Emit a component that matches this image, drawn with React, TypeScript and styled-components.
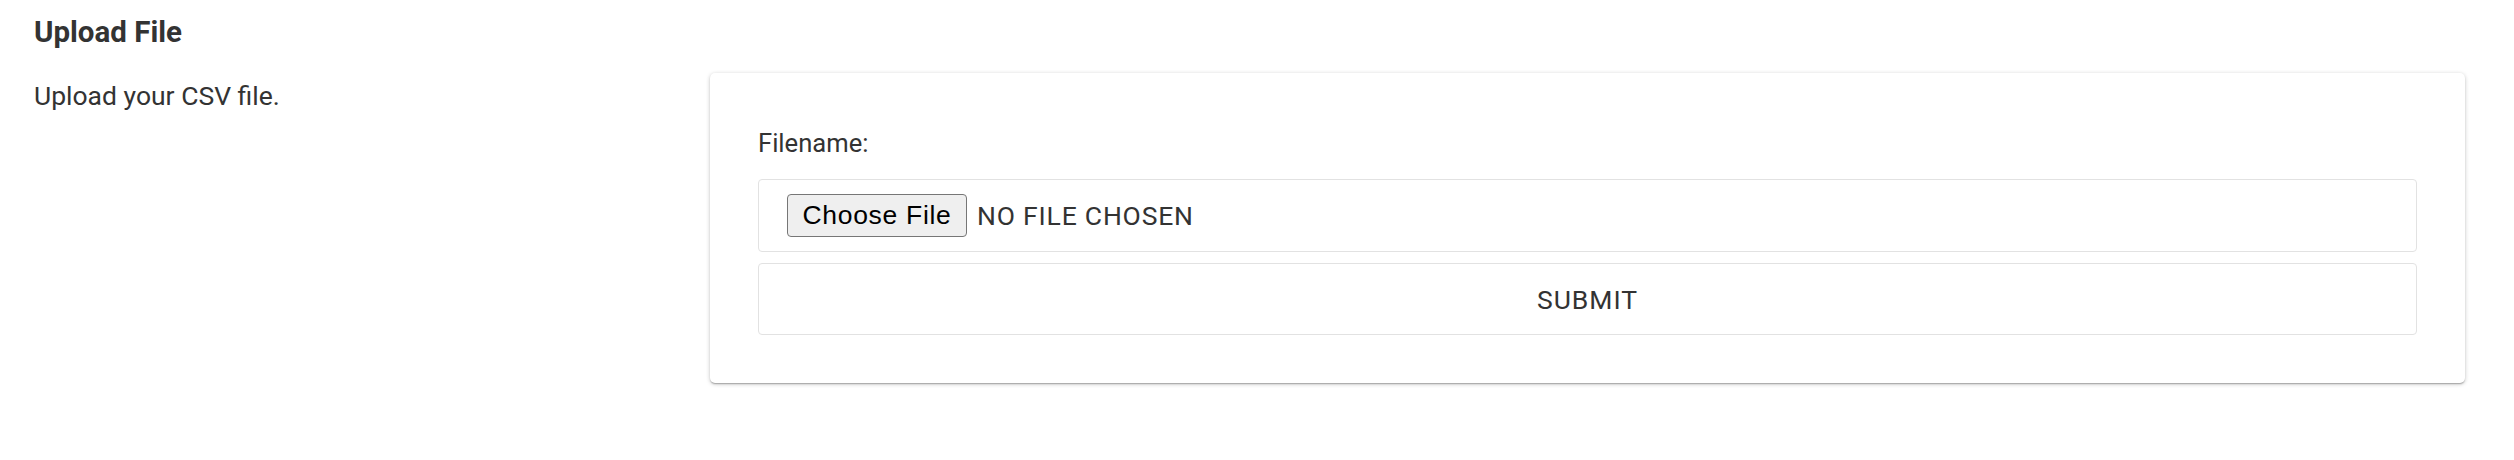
import React from "react";
import styled, { createGlobalStyle } from "styled-components";

const GlobalStyle = createGlobalStyle`
  html, body {
    margin: 0;
    padding: 0;
    background: #ffffff;
  }
  body {
    font-family: Roboto, "Liberation Sans", Arial, sans-serif;
    color: #333333;
  }
  * { box-sizing: border-box; }
`;

const Page = styled.div`
  padding: 11px 34px 40px 34px;
`;

const Title = styled.h2`
  margin: 0;
  font-size: 29.5px;
  line-height: 42px;
  font-weight: 700;
  color: #333333;
`;

const Section = styled.section`
  display: grid;
  grid-template-columns: 676px 1755px;
  align-items: start;
  margin-top: 20px;
`;

const Description = styled.p`
  margin: 0;
  padding-top: 4px;
  font-size: 26.5px;
  line-height: 38px;
  color: #333333;
`;

const Card = styled.div`
  background: #ffffff;
  border-radius: 5px;
  padding: 48px;
  box-shadow: 0 1px 4px rgba(0, 0, 0, 0.22), 0 1px 1px rgba(0, 0, 0, 0.14),
    0 2px 2px -1px rgba(0, 0, 0, 0.14);
`;

const Form = styled.form`
  display: flex;
  flex-direction: column;
`;

const Label = styled.label`
  display: block;
  margin-top: 4px;
  margin-bottom: 18px;
  font-size: 25.6px;
  line-height: 36px;
  color: #333333;
`;

const FileField = styled.label`
  display: flex;
  align-items: center;
  gap: 10px;
  height: 73px;
  padding: 0 28px;
  border: 1px solid #e2e2e2;
  border-radius: 4px;
  cursor: pointer;
`;

const HiddenInput = styled.input`
  position: absolute;
  width: 1px;
  height: 1px;
  opacity: 0;
  pointer-events: none;
`;

const ChooseButton = styled.span`
  display: inline-flex;
  align-items: center;
  justify-content: center;
  width: 180px;
  height: 43px;
  background: #efefef;
  border: 1px solid #767676;
  border-radius: 4px;
  font-family: "Liberation Sans", Arial, sans-serif;
  font-size: 26.5px;
  letter-spacing: 0.7px;
  color: #000000;
`;

const FileStatus = styled.span`
  font-size: 26.5px;
  letter-spacing: 0.8px;
  text-transform: uppercase;
  color: #333333;
`;

const SubmitButton = styled.button`
  margin-top: 11px;
  height: 72px;
  width: 100%;
  background: #ffffff;
  border: 1px solid #e2e2e2;
  border-radius: 4px;
  font-family: Roboto, "Liberation Sans", Arial, sans-serif;
  font-size: 26.5px;
  letter-spacing: 1px;
  text-transform: uppercase;
  color: #333333;
  cursor: pointer;
`;

export default function App() {
  return (
    <>
      <GlobalStyle />
      <Page>
        <Title>Upload File</Title>
        <Section>
          <Description>Upload your CSV file.</Description>
          <Card>
            <Form onSubmit={(e) => e.preventDefault()}>
              <Label htmlFor="csv-file">Filename:</Label>
              <FileField>
                <HiddenInput id="csv-file" type="file" accept=".csv" />
                <ChooseButton>Choose File</ChooseButton>
                <FileStatus>No file chosen</FileStatus>
              </FileField>
              <SubmitButton type="submit">Submit</SubmitButton>
            </Form>
          </Card>
        </Section>
      </Page>
    </>
  );
}
